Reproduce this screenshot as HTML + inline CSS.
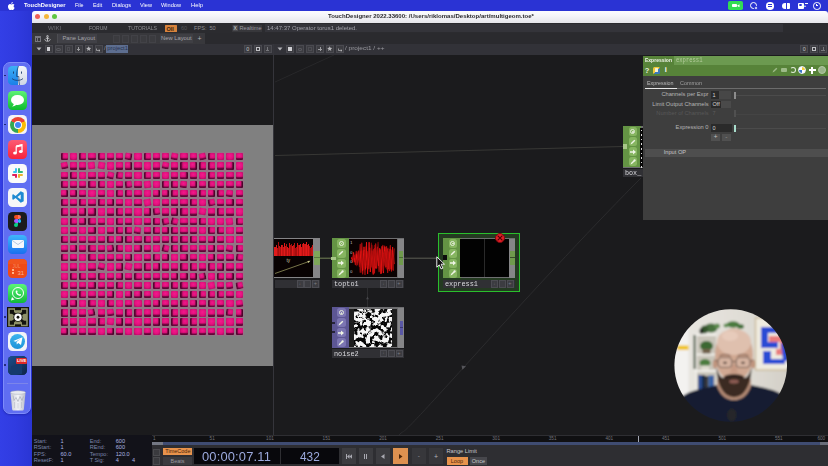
<!DOCTYPE html>
<html><head><meta charset="utf-8"><title>TouchDesigner</title>
<style>
*{box-sizing:border-box;margin:0;padding:0}
html,body{width:828px;height:466px;overflow:hidden;background:#2c36d6;font-family:"Liberation Sans",sans-serif;}
.a{position:absolute}
.t{position:absolute;white-space:nowrap;line-height:1}
.m{font-family:"Liberation Mono",monospace}
#desk{left:0;top:0;width:828px;height:466px;background:linear-gradient(90deg,#333fe6 0px,#303be0 16px,#2a35d4 32px,#2a35d4 100%)}
#menubar{left:0;top:0;width:828px;height:11px;background:#2a33d4}
#menubar .t{color:#fff;font-size:6px;top:2.400px}
#title{left:32px;top:10.700px;width:796px;height:12.300px;background:linear-gradient(#fcfcff 0%,#f5f5f9 40%,#e5e5ea 100%);border-radius:3px 3px 0 0}
#tb1{left:32px;top:23px;width:796px;height:10px;background:#2b2b2f}
#tb1 .t{color:#8d8d92;font-size:5.6px;top:2.6px}
#tb2{left:32px;top:33px;width:796px;height:11px;background:#2a2a2e}
#tb2 .t{color:#a5a5aa;font-size:5.8px;top:2.8px}
#pb{left:32px;top:43.700px;width:796px;height:11.300px;background:#323238}
.ib{position:absolute;top:1.5px;width:8px;height:8px;background:#3c3c41;border:0.5px solid #4a4a50;}
#net{left:32px;top:54.600px;width:796px;height:381.400px;background:#1b1b1d}
#viewer{left:32px;top:124.500px;width:241px;height:241px;background:#808080}
#split{left:273px;top:44px;width:1.100px;height:392px;background:#35353b}
.cube{position:absolute;width:7.300px;height:7.300px;border-radius:1px}
.c1{background:linear-gradient(180deg,rgba(90,6,52,0) 62%,rgba(90,6,52,.95) 84%),radial-gradient(circle at 48% 36%,#f2188c 0%,#e2107c 40%,#8a0a50 100%)}
.c2{background:linear-gradient(90deg,rgba(80,5,46,.95) 12%,rgba(80,5,46,0) 36%),linear-gradient(180deg,rgba(90,6,52,0) 70%,rgba(90,6,52,.8) 92%),radial-gradient(circle at 62% 40%,#f0168a 0%,#d80f76 42%,#6a063e 100%)}
.c3{background:linear-gradient(270deg,rgba(70,4,40,.95) 10%,rgba(70,4,40,0) 34%),linear-gradient(180deg,rgba(90,6,52,0) 66%,rgba(90,6,52,.9) 88%),radial-gradient(circle at 40% 32%,#f41a8e 0%,#d80f76 42%,#62063a 100%)}
.c4{background:radial-gradient(circle at 50% 40%,#f31a8d 0%,#e4117e 50%,#9a0b58 100%)}
</style></head><body>
<div id="desk" class="a"></div>
<div id="menubar" class="a"><svg class="a" style="left:7.5px;top:1.5px" width="7" height="8" viewBox="0 0 14 16"><path fill="#fff" d="M9.7 0c.1 1-.3 1.9-.9 2.600-.6.700-1.500 1.200-2.400 1.100-.1-.9.400-1.900.9-2.500C7.900.500 8.900.050 9.700 0zM12.900 5.500c-1.100.700-1.700 1.700-1.700 2.900 0 1.500.9 2.600 2 3.100-.3.900-.7 1.700-1.300 2.500-.700 1-1.400 2-2.500 2-1.100 0-1.400-.7-2.700-.7-1.300 0-1.700.7-2.700.7-1.100 0-1.900-1.100-2.600-2.100C-.3 11.500-.5 7.900.900 6c.8-1.200 2-1.900 3.200-1.900 1.200 0 1.900.7 2.900.7 1 0 1.600-.7 3-.7 1 0 2.100.5 2.900 1.400z"></path></svg><span class="t" style="left: 24px; font-weight: bold; transform: scaleX(0.96); transform-origin: 0px 0px;">TouchDesigner</span><span class="t" style="left: 74.5px; transform: scaleX(0.879); transform-origin: 0px 0px;">File</span><span class="t" style="left: 93px; transform: scaleX(0.889); transform-origin: 0px 0px;">Edit</span><span class="t" style="left: 112px; transform: scaleX(0.949); transform-origin: 0px 0px;">Dialogs</span><span class="t" style="left: 140px; transform: scaleX(0.93); transform-origin: 0px 0px;">View</span><span class="t" style="left: 161px; transform: scaleX(0.937); transform-origin: 0px 0px;">Window</span><span class="t" style="left: 191px; transform: scaleX(0.972); transform-origin: 0px 0px;">Help</span><div class="a" style="left:728px;top:.8px;width:15.200px;height:9.200px;border-radius:1.800px;background:#32dc54"></div><div class="a" style="left:732.200px;top:3.600px;width:5px;height:3.800px;border-radius:.8px;background:#fff"></div><svg class="a" style="left:737.200px;top:3.700px" width="3" height="3.6" viewBox="0 0 3 3.6"><path d="M0 1.800L2.500 .2V3.400z" fill="#fff"></path></svg><div class="a" style="left:749.5px;top:2px;width:7px;height:7px;border-radius:50%;border:1.2px solid #fff"></div><div class="a" style="left:753.5px;top:5.5px;width:4px;height:4px;border-radius:50%;background:#fff;border:.6px solid #2a33d4"></div><div class="a" style="left:766px;top:2px;width:7.500px;height:7.500px;border-radius:50%;background:#fff"></div><div class="a" style="left:767.5px;top:4.2px;width:4.5px;height:1px;background:#2a33d4"></div><div class="a" style="left:767.5px;top:6.2px;width:4.5px;height:1px;background:#2a33d4"></div><div class="a" style="left:781.5px;top:2.5px;width:8px;height:6.5px;border-radius:3px 1px 1px 3px;background:#fff"></div><div class="a" style="left:786px;top:2.5px;width:1.2px;height:6.5px;background:#2a33d4"></div><div class="a" style="left:797.5px;top:2.5px;width:6px;height:6px;border-radius:1px;background:#fff"></div><div class="a" style="left:799px;top:3.6px;width:3px;height:2.2px;border-radius:50%;background:#2a33d4"></div><div class="t" style="left:804px;top:4px;color:#fff;font-size:5px">•</div><div class="a" style="left:804.5px;top:3.2px;width:3.5px;height:.9px;background:#fff"></div><div class="a" style="left:813px;top:2px;width:7.500px;height:7.500px;border-radius:50%;border:1px solid #fff"></div><div class="a" style="left:816.3px;top:3.6px;width:.9px;height:2.600px;background:#fff"></div><div class="a" style="left:816.3px;top:5.4px;width:2.2px;height:.9px;background:#fff"></div></div><div id="title" class="a"><div class="a" style="left:3px;top:3.2px;width:5.4px;height:5.4px;border-radius:50%;background:#ec5f57"></div><div class="a" style="left:11.5px;top:3.2px;width:5.4px;height:5.4px;border-radius:50%;background:#f4b63a"></div><div class="a" style="left:20px;top:3.2px;width:5.4px;height:5.4px;border-radius:50%;background:#5fc643"></div><span class="t" id="ttl" style="left: 295.5px; top: 3.2px; font-size: 5.95px; font-weight: bold; color: rgb(42, 42, 46); transform: scaleX(1.017); transform-origin: 0px 0px;">TouchDesigner 2022.33600: /Users/riklomas/Desktop/art/multigeom.toe*</span></div><div id="tb1" class="a"><span class="t" style="left: 15.5px; color: rgb(112, 112, 118); transform: scaleX(1.113); transform-origin: 0px 0px;">WIKI</span><span class="t" style="left: 57px; color: rgb(141, 141, 146); transform: scaleX(0.902); transform-origin: 0px 0px;">FORUM</span><span class="t" style="left: 96px; color: rgb(141, 141, 146); transform: scaleX(0.927); transform-origin: 0px 0px;">TUTORIALS</span><div class="a" style="left:133px;top:1.500px;width:11.500px;height:7px;background:#d8833c;border-radius:.5px"></div><span class="t" style="left:134.5px;color:#3a2410;font-weight:bold;font-size:5.5px;top:3.700px">OII</span><span class="t" style="left:149px;color:#55555a">60</span><span class="t" style="left:162px">FPS:</span><span class="t" style="left:177.5px">50</span><div class="a" style="left:199.5px;top:1.5px;width:30.5px;height:7.500px;background:#37373b"></div><div class="a" style="left:200.5px;top:2.2px;width:5.5px;height:5.5px;background:#4a4a4f"></div><span class="t" style="left:201.6px;color:#ddd;font-size:5px;top:2.7px">X</span><span class="t" style="left:207.500px;color:#9a9aa0">Realtime</span><div class="a" style="left:233px;top:.8px;width:518px;height:8.700px;background:#34343a"></div><span class="t" style="left: 235px; color: rgb(160, 160, 168); transform: scaleX(1.072); transform-origin: 0px 0px;">14:47:37 Operator torus1 deleted.</span></div><div id="tb2" class="a"><div class="a" style="left:0;top:0;width:173px;height:11px;background:#38383c"></div><div class="a" style="left:2.5px;top:2.5px;width:6px;height:6px;border:.8px solid #77777e"></div><div class="a" style="left:2.5px;top:4.3px;width:6px;height:.8px;background:#77777e"></div><div class="a" style="left:5px;top:4.3px;width:.8px;height:4px;background:#77777e"></div><svg class="a" style="left:11.5px;top:2px" width="7" height="7" viewBox="0 0 14 14"><g stroke="#c8c8cc" stroke-width="1.800" fill="none"><circle cx="7" cy="2.5" r="1.600"></circle><path d="M7 4v8M3.500 6.500h7M1.500 8.500c.5 3 3 4 5.500 4s5-1 5.500-4"></path></g></svg><div class="a" style="left:25px;top:1px;width:39.500px;height:9px;background:#414147;border-left:.6px solid #4d4d52"></div><span class="t" style="left:30.5px">Pane Layout</span><div class="a" style="left:80.5px;top:1.500px;width:7.600px;height:8px;background:#3b3b3f;border:.5px solid #424247"></div><div class="a" style="left:89.6px;top:1.500px;width:7.600px;height:8px;background:#3b3b3f;border:.5px solid #424247"></div><div class="a" style="left:98.7px;top:1.500px;width:7.600px;height:8px;background:#3b3b3f;border:.5px solid #424247"></div><div class="a" style="left:107.8px;top:1.500px;width:7.600px;height:8px;background:#3b3b3f;border:.5px solid #424247"></div><div class="a" style="left:116.9px;top:1.500px;width:7.600px;height:8px;background:#3b3b3f;border:.5px solid #424247"></div><div class="a" style="left:127.500px;top:1px;width:33px;height:9px;background:#3f3f44"></div><span class="t" style="left:129px">New Layout</span><span class="t" style="left:165.500px;top:2.2px;font-size:7px;color:#b0b0b5">+</span></div><div id="pb" class="a"><svg class="a" style="left:3.5px;top:3.500px" width="6" height="4" viewBox="0 0 6 4"><path d="M.500 .5h5L3 3.600z" fill="#b0b0b4"></path></svg><div class="ib" style="left:12.5px"></div><div class="a" style="left:14.7px;top:3.700px;width:3.600px;height:3.600px;background:#d0d0d4"></div><div class="ib" style="left:22.5px"></div><div class="a" style="left:24.3px;top:4px;width:4.400px;height:3px;border-radius:50%;border:.7px solid #5a5a60"></div><div class="ib" style="left:32.5px"></div><div class="a" style="left:34.7px;top:3.700px;width:3.600px;height:3.600px;border:.6px solid #4c4c52"></div><div class="ib" style="left:42.5px"></div><div class="a" style="left:44.6px;top:5.200px;width:3.800px;height:.8px;background:#9c9ca0"></div><div class="a" style="left:46.1px;top:3.700px;width:.8px;height:3.800px;background:#9c9ca0"></div><div class="ib" style="left:52.5px"></div><svg class="a" style="left:53.8px;top:2.800px" width="5.400" height="5.400" viewBox="0 0 10 10"><path d="M5 .3l1.400 3.100 3.400.3-2.600 2.200.8 3.400L5 7.500 2 9.300l.8-3.400L.2 3.700l3.400-.3z" fill="#b4b4b8"></path></svg><div class="ib" style="left:62.5px"></div><svg class="a" style="left:64.1px;top:3.300px" width="5" height="5" viewBox="0 0 10 10"><path d="M1 3v4h7M8 7l-2.500-2M8 7l-2.500 2" stroke="#c4c4c8" stroke-width="1.300" fill="none"></path></svg><span class="t" style="left:72px;top:2.800px;font-size:5.800px;color:#9a9aa0">/</span><div class="a" style="left:74.400px;top:1.600px;width:22px;height:7.800px;background:#5d6e90"></div><span class="t" style="left:75.300px;top:2.800px;font-size:5.800px;color:#28324e">project1</span><div class="ib" style="left:211.5px"></div><div class="ib" style="left:221.5px"></div><div class="ib" style="left:231.5px"></div><span class="t" style="left:214.300px;top:3px;font-size:5.400px;color:#c0c0c4">0</span><div class="a" style="left:223.800px;top:3.600px;width:4.400px;height:4px;border:.7px solid #c0c0c4;border-top-width:1.300px"></div><div class="a" style="left:235px;top:3.300px;width:1px;height:3.600px;background:#77777c"></div><div class="a" style="left:233.800px;top:6.200px;width:3.400px;height:1px;background:#77777c"></div><svg class="a" style="left:245px;top:3.500px" width="6" height="4" viewBox="0 0 6 4"><path d="M.500 .5h5L3 3.600z" fill="#b0b0b4"></path></svg><div class="ib" style="left:254px"></div><div class="a" style="left:256.2px;top:3.700px;width:3.600px;height:3.600px;background:#d0d0d4"></div><div class="ib" style="left:264px"></div><div class="a" style="left:265.8px;top:4px;width:4.400px;height:3px;border-radius:50%;border:.7px solid #5a5a60"></div><div class="ib" style="left:274px"></div><div class="a" style="left:276.2px;top:3.700px;width:3.600px;height:3.600px;border:.6px solid #4c4c52"></div><div class="ib" style="left:284px"></div><div class="a" style="left:286.1px;top:5.200px;width:3.800px;height:.8px;background:#9c9ca0"></div><div class="a" style="left:287.6px;top:3.700px;width:.8px;height:3.800px;background:#9c9ca0"></div><div class="ib" style="left:294px"></div><svg class="a" style="left:295.3px;top:2.800px" width="5.400" height="5.400" viewBox="0 0 10 10"><path d="M5 .3l1.400 3.100 3.400.3-2.600 2.200.8 3.400L5 7.500 2 9.300l.8-3.400L.2 3.700l3.400-.3z" fill="#b4b4b8"></path></svg><div class="ib" style="left:304px"></div><svg class="a" style="left:305.6px;top:3.300px" width="5" height="5" viewBox="0 0 10 10"><path d="M1 3v4h7M8 7l-2.500-2M8 7l-2.500 2" stroke="#c4c4c8" stroke-width="1.300" fill="none"></path></svg><span class="t" style="left: 312.6px; top: 2.8px; font-size: 5.8px; color: rgb(154, 154, 160); transform: scaleX(1.114); transform-origin: 0px 0px;">/ project1 / ++</span><div class="ib" style="left:768px"></div><div class="ib" style="left:777.5px"></div><div class="ib" style="left:787px"></div><span class="t" style="left:770.800px;top:3px;font-size:5.400px;color:#c0c0c4">0</span><div class="a" style="left:779.800px;top:3.600px;width:4.400px;height:4px;border:.7px solid #c0c0c4;border-top-width:1.300px"></div><div class="a" style="left:790.500px;top:3.300px;width:1px;height:3.600px;background:#77777c"></div><div class="a" style="left:789.300px;top:6.200px;width:3.400px;height:1px;background:#77777c"></div></div><div id="net" class="a"></div><div id="viewer" class="a"><div class="a" style="left:28px;top:27.700px;width:184px;height:183.500px;background:rgba(228,70,156,.19)"></div><i class="cube c2" style="left:28.8px;top:28.7px;"></i><i class="cube c4" style="left:38.0px;top:28.7px;"></i><i class="cube c2" style="left:47.2px;top:28.7px;"></i><i class="cube c1" style="left:56.4px;top:28.7px;"></i><i class="cube c2" style="left:65.6px;top:28.7px;"></i><i class="cube c1" style="left:74.8px;top:28.7px;"></i><i class="cube c1" style="left:84.0px;top:28.7px;"></i><i class="cube c3" style="left:93.2px;top:28.7px;transform:rotate(9deg);"></i><i class="cube c4" style="left:102.4px;top:28.7px;"></i><i class="cube c2" style="left:111.6px;top:28.7px;"></i><i class="cube c1" style="left:120.8px;top:28.7px;"></i><i class="cube c1" style="left:130.0px;top:28.7px;"></i><i class="cube c1" style="left:139.2px;top:28.7px;transform:rotate(9deg);"></i><i class="cube c1" style="left:148.4px;top:28.7px;"></i><i class="cube c1" style="left:157.6px;top:28.7px;"></i><i class="cube c1" style="left:166.8px;top:28.7px;transform:rotate(-10deg);"></i><i class="cube c2" style="left:176.0px;top:28.7px;"></i><i class="cube c4" style="left:185.2px;top:28.7px;"></i><i class="cube c4" style="left:194.4px;top:28.7px;"></i><i class="cube c1" style="left:203.6px;top:28.7px;"></i><i class="cube c1" style="left:28.8px;top:37.9px;transform:rotate(-10deg);"></i><i class="cube c1" style="left:38.0px;top:37.9px;"></i><i class="cube c1" style="left:47.2px;top:37.9px;"></i><i class="cube c4" style="left:56.4px;top:37.9px;transform:rotate(-7deg);"></i><i class="cube c4" style="left:65.6px;top:37.9px;transform:rotate(9deg);"></i><i class="cube c4" style="left:74.8px;top:37.9px;"></i><i class="cube c1" style="left:84.0px;top:37.9px;"></i><i class="cube c3" style="left:93.2px;top:37.9px;"></i><i class="cube c1" style="left:102.4px;top:37.9px;"></i><i class="cube c4" style="left:111.6px;top:37.9px;"></i><i class="cube c1" style="left:120.8px;top:37.9px;"></i><i class="cube c1" style="left:130.0px;top:37.9px;transform:rotate(9deg);"></i><i class="cube c1" style="left:139.2px;top:37.9px;"></i><i class="cube c2" style="left:148.4px;top:37.9px;"></i><i class="cube c3" style="left:157.6px;top:37.9px;"></i><i class="cube c2" style="left:166.8px;top:37.9px;"></i><i class="cube c2" style="left:176.0px;top:37.9px;"></i><i class="cube c1" style="left:185.2px;top:37.9px;"></i><i class="cube c3" style="left:194.4px;top:37.9px;"></i><i class="cube c4" style="left:203.6px;top:37.9px;"></i><i class="cube c1" style="left:28.8px;top:47.1px;"></i><i class="cube c2" style="left:38.0px;top:47.1px;"></i><i class="cube c4" style="left:47.2px;top:47.1px;"></i><i class="cube c1" style="left:56.4px;top:47.1px;"></i><i class="cube c1" style="left:65.6px;top:47.1px;"></i><i class="cube c1" style="left:74.8px;top:47.1px;transform:rotate(12deg);"></i><i class="cube c2" style="left:84.0px;top:47.1px;transform:rotate(6deg);"></i><i class="cube c1" style="left:93.2px;top:47.1px;"></i><i class="cube c4" style="left:102.4px;top:47.1px;"></i><i class="cube c2" style="left:111.6px;top:47.1px;"></i><i class="cube c1" style="left:120.8px;top:47.1px;"></i><i class="cube c4" style="left:130.0px;top:47.1px;"></i><i class="cube c1" style="left:139.2px;top:47.1px;"></i><i class="cube c3" style="left:148.4px;top:47.1px;"></i><i class="cube c1" style="left:157.6px;top:47.1px;"></i><i class="cube c4" style="left:166.8px;top:47.1px;"></i><i class="cube c2" style="left:176.0px;top:47.1px;"></i><i class="cube c1" style="left:185.2px;top:47.1px;"></i><i class="cube c1" style="left:194.4px;top:47.1px;"></i><i class="cube c1" style="left:203.6px;top:47.1px;"></i><i class="cube c2" style="left:28.8px;top:56.2px;"></i><i class="cube c1" style="left:38.0px;top:56.2px;"></i><i class="cube c1" style="left:47.2px;top:56.2px;"></i><i class="cube c2" style="left:56.4px;top:56.2px;"></i><i class="cube c2" style="left:65.6px;top:56.2px;"></i><i class="cube c4" style="left:74.8px;top:56.2px;"></i><i class="cube c1" style="left:84.0px;top:56.2px;"></i><i class="cube c2" style="left:93.2px;top:56.2px;transform:rotate(-7deg);"></i><i class="cube c1" style="left:102.4px;top:56.2px;"></i><i class="cube c4" style="left:111.6px;top:56.2px;transform:rotate(-7deg);"></i><i class="cube c4" style="left:120.8px;top:56.2px;"></i><i class="cube c2" style="left:130.0px;top:56.2px;"></i><i class="cube c2" style="left:139.2px;top:56.2px;"></i><i class="cube c1" style="left:148.4px;top:56.2px;transform:rotate(6deg);"></i><i class="cube c3" style="left:157.6px;top:56.2px;"></i><i class="cube c1" style="left:166.8px;top:56.2px;"></i><i class="cube c2" style="left:176.0px;top:56.2px;"></i><i class="cube c1" style="left:185.2px;top:56.2px;"></i><i class="cube c1" style="left:194.4px;top:56.2px;"></i><i class="cube c3" style="left:203.6px;top:56.2px;"></i><i class="cube c3" style="left:28.8px;top:65.4px;"></i><i class="cube c3" style="left:38.0px;top:65.4px;"></i><i class="cube c1" style="left:47.2px;top:65.4px;"></i><i class="cube c4" style="left:56.4px;top:65.4px;"></i><i class="cube c1" style="left:65.6px;top:65.4px;"></i><i class="cube c4" style="left:74.8px;top:65.4px;"></i><i class="cube c2" style="left:84.0px;top:65.4px;"></i><i class="cube c2" style="left:93.2px;top:65.4px;"></i><i class="cube c1" style="left:102.4px;top:65.4px;"></i><i class="cube c4" style="left:111.6px;top:65.4px;"></i><i class="cube c3" style="left:120.8px;top:65.4px;"></i><i class="cube c3" style="left:130.0px;top:65.4px;"></i><i class="cube c2" style="left:139.2px;top:65.4px;"></i><i class="cube c1" style="left:148.4px;top:65.4px;"></i><i class="cube c1" style="left:157.6px;top:65.4px;"></i><i class="cube c2" style="left:166.8px;top:65.4px;"></i><i class="cube c3" style="left:176.0px;top:65.4px;"></i><i class="cube c2" style="left:185.2px;top:65.4px;"></i><i class="cube c1" style="left:194.4px;top:65.4px;transform:rotate(6deg);"></i><i class="cube c1" style="left:203.6px;top:65.4px;"></i><i class="cube c2" style="left:28.8px;top:74.6px;"></i><i class="cube c1" style="left:38.0px;top:74.6px;"></i><i class="cube c2" style="left:47.2px;top:74.6px;"></i><i class="cube c1" style="left:56.4px;top:74.6px;"></i><i class="cube c2" style="left:65.6px;top:74.6px;"></i><i class="cube c3" style="left:74.8px;top:74.6px;"></i><i class="cube c1" style="left:84.0px;top:74.6px;"></i><i class="cube c4" style="left:93.2px;top:74.6px;"></i><i class="cube c1" style="left:102.4px;top:74.6px;"></i><i class="cube c4" style="left:111.6px;top:74.6px;transform:rotate(-10deg);"></i><i class="cube c4" style="left:120.8px;top:74.6px;"></i><i class="cube c1" style="left:130.0px;top:74.6px;"></i><i class="cube c1" style="left:139.2px;top:74.6px;"></i><i class="cube c1" style="left:148.4px;top:74.6px;"></i><i class="cube c2" style="left:157.6px;top:74.6px;"></i><i class="cube c4" style="left:166.8px;top:74.6px;"></i><i class="cube c2" style="left:176.0px;top:74.6px;transform:rotate(-10deg);"></i><i class="cube c1" style="left:185.2px;top:74.6px;"></i><i class="cube c3" style="left:194.4px;top:74.6px;"></i><i class="cube c1" style="left:203.6px;top:74.6px;"></i><i class="cube c2" style="left:28.8px;top:83.8px;"></i><i class="cube c1" style="left:38.0px;top:83.8px;"></i><i class="cube c3" style="left:47.2px;top:83.8px;"></i><i class="cube c3" style="left:56.4px;top:83.8px;"></i><i class="cube c4" style="left:65.6px;top:83.8px;"></i><i class="cube c1" style="left:74.8px;top:83.8px;"></i><i class="cube c2" style="left:84.0px;top:83.8px;"></i><i class="cube c1" style="left:93.2px;top:83.8px;"></i><i class="cube c4" style="left:102.4px;top:83.8px;"></i><i class="cube c3" style="left:111.6px;top:83.8px;"></i><i class="cube c2" style="left:120.8px;top:83.8px;transform:rotate(-7deg);"></i><i class="cube c1" style="left:130.0px;top:83.8px;"></i><i class="cube c3" style="left:139.2px;top:83.8px;"></i><i class="cube c2" style="left:148.4px;top:83.8px;"></i><i class="cube c1" style="left:157.6px;top:83.8px;"></i><i class="cube c4" style="left:166.8px;top:83.8px;transform:rotate(9deg);"></i><i class="cube c1" style="left:176.0px;top:83.8px;"></i><i class="cube c2" style="left:185.2px;top:83.8px;"></i><i class="cube c1" style="left:194.4px;top:83.8px;"></i><i class="cube c4" style="left:203.6px;top:83.8px;"></i><i class="cube c4" style="left:28.8px;top:93.0px;"></i><i class="cube c2" style="left:38.0px;top:93.0px;"></i><i class="cube c3" style="left:47.2px;top:93.0px;"></i><i class="cube c2" style="left:56.4px;top:93.0px;"></i><i class="cube c1" style="left:65.6px;top:93.0px;"></i><i class="cube c4" style="left:74.8px;top:93.0px;"></i><i class="cube c2" style="left:84.0px;top:93.0px;"></i><i class="cube c1" style="left:93.2px;top:93.0px;"></i><i class="cube c4" style="left:102.4px;top:93.0px;"></i><i class="cube c1" style="left:111.6px;top:93.0px;"></i><i class="cube c2" style="left:120.8px;top:93.0px;"></i><i class="cube c2" style="left:130.0px;top:93.0px;transform:rotate(-10deg);"></i><i class="cube c2" style="left:139.2px;top:93.0px;transform:rotate(12deg);"></i><i class="cube c1" style="left:148.4px;top:93.0px;"></i><i class="cube c1" style="left:157.6px;top:93.0px;"></i><i class="cube c2" style="left:166.8px;top:93.0px;"></i><i class="cube c4" style="left:176.0px;top:93.0px;"></i><i class="cube c4" style="left:185.2px;top:93.0px;"></i><i class="cube c4" style="left:194.4px;top:93.0px;transform:rotate(-7deg);"></i><i class="cube c2" style="left:203.6px;top:93.0px;"></i><i class="cube c4" style="left:28.8px;top:102.1px;"></i><i class="cube c1" style="left:38.0px;top:102.1px;"></i><i class="cube c4" style="left:47.2px;top:102.1px;"></i><i class="cube c3" style="left:56.4px;top:102.1px;"></i><i class="cube c4" style="left:65.6px;top:102.1px;"></i><i class="cube c1" style="left:74.8px;top:102.1px;"></i><i class="cube c2" style="left:84.0px;top:102.1px;"></i><i class="cube c2" style="left:93.2px;top:102.1px;"></i><i class="cube c1" style="left:102.4px;top:102.1px;transform:rotate(9deg);"></i><i class="cube c1" style="left:111.6px;top:102.1px;"></i><i class="cube c2" style="left:120.8px;top:102.1px;"></i><i class="cube c3" style="left:130.0px;top:102.1px;"></i><i class="cube c2" style="left:139.2px;top:102.1px;"></i><i class="cube c1" style="left:148.4px;top:102.1px;"></i><i class="cube c1" style="left:157.6px;top:102.1px;"></i><i class="cube c4" style="left:166.8px;top:102.1px;"></i><i class="cube c2" style="left:176.0px;top:102.1px;"></i><i class="cube c2" style="left:185.2px;top:102.1px;"></i><i class="cube c4" style="left:194.4px;top:102.1px;"></i><i class="cube c1" style="left:203.6px;top:102.1px;"></i><i class="cube c2" style="left:28.8px;top:111.3px;"></i><i class="cube c1" style="left:38.0px;top:111.3px;"></i><i class="cube c1" style="left:47.2px;top:111.3px;"></i><i class="cube c1" style="left:56.4px;top:111.3px;"></i><i class="cube c1" style="left:65.6px;top:111.3px;"></i><i class="cube c2" style="left:74.8px;top:111.3px;"></i><i class="cube c3" style="left:84.0px;top:111.3px;"></i><i class="cube c2" style="left:93.2px;top:111.3px;"></i><i class="cube c1" style="left:102.4px;top:111.3px;"></i><i class="cube c2" style="left:111.6px;top:111.3px;"></i><i class="cube c1" style="left:120.8px;top:111.3px;"></i><i class="cube c1" style="left:130.0px;top:111.3px;"></i><i class="cube c2" style="left:139.2px;top:111.3px;"></i><i class="cube c2" style="left:148.4px;top:111.3px;"></i><i class="cube c2" style="left:157.6px;top:111.3px;"></i><i class="cube c1" style="left:166.8px;top:111.3px;"></i><i class="cube c3" style="left:176.0px;top:111.3px;"></i><i class="cube c1" style="left:185.2px;top:111.3px;"></i><i class="cube c4" style="left:194.4px;top:111.3px;"></i><i class="cube c4" style="left:203.6px;top:111.3px;"></i><i class="cube c1" style="left:28.8px;top:120.5px;"></i><i class="cube c3" style="left:38.0px;top:120.5px;"></i><i class="cube c1" style="left:47.2px;top:120.5px;"></i><i class="cube c2" style="left:56.4px;top:120.5px;"></i><i class="cube c1" style="left:65.6px;top:120.5px;"></i><i class="cube c3" style="left:74.8px;top:120.5px;transform:rotate(-7deg);"></i><i class="cube c2" style="left:84.0px;top:120.5px;"></i><i class="cube c4" style="left:93.2px;top:120.5px;"></i><i class="cube c3" style="left:102.4px;top:120.5px;"></i><i class="cube c1" style="left:111.6px;top:120.5px;"></i><i class="cube c4" style="left:120.8px;top:120.5px;"></i><i class="cube c2" style="left:130.0px;top:120.5px;transform:rotate(12deg);"></i><i class="cube c2" style="left:139.2px;top:120.5px;"></i><i class="cube c2" style="left:148.4px;top:120.5px;"></i><i class="cube c1" style="left:157.6px;top:120.5px;"></i><i class="cube c1" style="left:166.8px;top:120.5px;"></i><i class="cube c3" style="left:176.0px;top:120.5px;"></i><i class="cube c1" style="left:185.2px;top:120.5px;"></i><i class="cube c1" style="left:194.4px;top:120.5px;transform:rotate(9deg);"></i><i class="cube c2" style="left:203.6px;top:120.5px;"></i><i class="cube c2" style="left:28.8px;top:129.7px;"></i><i class="cube c1" style="left:38.0px;top:129.7px;"></i><i class="cube c4" style="left:47.2px;top:129.7px;"></i><i class="cube c2" style="left:56.4px;top:129.7px;"></i><i class="cube c1" style="left:65.6px;top:129.7px;"></i><i class="cube c1" style="left:74.8px;top:129.7px;"></i><i class="cube c1" style="left:84.0px;top:129.7px;"></i><i class="cube c3" style="left:93.2px;top:129.7px;"></i><i class="cube c4" style="left:102.4px;top:129.7px;"></i><i class="cube c1" style="left:111.6px;top:129.7px;"></i><i class="cube c2" style="left:120.8px;top:129.7px;"></i><i class="cube c3" style="left:130.0px;top:129.7px;"></i><i class="cube c4" style="left:139.2px;top:129.7px;"></i><i class="cube c3" style="left:148.4px;top:129.7px;"></i><i class="cube c1" style="left:157.6px;top:129.7px;"></i><i class="cube c4" style="left:166.8px;top:129.7px;"></i><i class="cube c3" style="left:176.0px;top:129.7px;"></i><i class="cube c1" style="left:185.2px;top:129.7px;"></i><i class="cube c1" style="left:194.4px;top:129.7px;"></i><i class="cube c2" style="left:203.6px;top:129.7px;transform:rotate(6deg);"></i><i class="cube c4" style="left:28.8px;top:138.9px;"></i><i class="cube c1" style="left:38.0px;top:138.9px;"></i><i class="cube c4" style="left:47.2px;top:138.9px;"></i><i class="cube c1" style="left:56.4px;top:138.9px;"></i><i class="cube c1" style="left:65.6px;top:138.9px;transform:rotate(12deg);"></i><i class="cube c4" style="left:74.8px;top:138.9px;"></i><i class="cube c3" style="left:84.0px;top:138.9px;"></i><i class="cube c4" style="left:93.2px;top:138.9px;transform:rotate(12deg);"></i><i class="cube c1" style="left:102.4px;top:138.9px;"></i><i class="cube c2" style="left:111.6px;top:138.9px;"></i><i class="cube c3" style="left:120.8px;top:138.9px;"></i><i class="cube c1" style="left:130.0px;top:138.9px;"></i><i class="cube c1" style="left:139.2px;top:138.9px;"></i><i class="cube c2" style="left:148.4px;top:138.9px;"></i><i class="cube c2" style="left:157.6px;top:138.9px;"></i><i class="cube c1" style="left:166.8px;top:138.9px;"></i><i class="cube c2" style="left:176.0px;top:138.9px;"></i><i class="cube c3" style="left:185.2px;top:138.9px;"></i><i class="cube c1" style="left:194.4px;top:138.9px;"></i><i class="cube c1" style="left:203.6px;top:138.9px;"></i><i class="cube c4" style="left:28.8px;top:148.0px;"></i><i class="cube c2" style="left:38.0px;top:148.0px;"></i><i class="cube c2" style="left:47.2px;top:148.0px;"></i><i class="cube c1" style="left:56.4px;top:148.0px;"></i><i class="cube c2" style="left:65.6px;top:148.0px;"></i><i class="cube c1" style="left:74.8px;top:148.0px;"></i><i class="cube c3" style="left:84.0px;top:148.0px;"></i><i class="cube c1" style="left:93.2px;top:148.0px;"></i><i class="cube c2" style="left:102.4px;top:148.0px;"></i><i class="cube c1" style="left:111.6px;top:148.0px;"></i><i class="cube c1" style="left:120.8px;top:148.0px;"></i><i class="cube c1" style="left:130.0px;top:148.0px;"></i><i class="cube c3" style="left:139.2px;top:148.0px;"></i><i class="cube c3" style="left:148.4px;top:148.0px;"></i><i class="cube c3" style="left:157.6px;top:148.0px;"></i><i class="cube c3" style="left:166.8px;top:148.0px;transform:rotate(-10deg);"></i><i class="cube c4" style="left:176.0px;top:148.0px;"></i><i class="cube c2" style="left:185.2px;top:148.0px;"></i><i class="cube c3" style="left:194.4px;top:148.0px;"></i><i class="cube c1" style="left:203.6px;top:148.0px;"></i><i class="cube c2" style="left:28.8px;top:157.2px;"></i><i class="cube c1" style="left:38.0px;top:157.2px;"></i><i class="cube c1" style="left:47.2px;top:157.2px;"></i><i class="cube c3" style="left:56.4px;top:157.2px;"></i><i class="cube c1" style="left:65.6px;top:157.2px;"></i><i class="cube c1" style="left:74.8px;top:157.2px;"></i><i class="cube c2" style="left:84.0px;top:157.2px;"></i><i class="cube c4" style="left:93.2px;top:157.2px;"></i><i class="cube c1" style="left:102.4px;top:157.2px;"></i><i class="cube c4" style="left:111.6px;top:157.2px;"></i><i class="cube c2" style="left:120.8px;top:157.2px;"></i><i class="cube c1" style="left:130.0px;top:157.2px;"></i><i class="cube c2" style="left:139.2px;top:157.2px;"></i><i class="cube c2" style="left:148.4px;top:157.2px;"></i><i class="cube c1" style="left:157.6px;top:157.2px;"></i><i class="cube c4" style="left:166.8px;top:157.2px;"></i><i class="cube c4" style="left:176.0px;top:157.2px;transform:rotate(-10deg);"></i><i class="cube c1" style="left:185.2px;top:157.2px;"></i><i class="cube c1" style="left:194.4px;top:157.2px;transform:rotate(-7deg);"></i><i class="cube c2" style="left:203.6px;top:157.2px;transform:rotate(-10deg);"></i><i class="cube c4" style="left:28.8px;top:166.4px;"></i><i class="cube c1" style="left:38.0px;top:166.4px;"></i><i class="cube c2" style="left:47.2px;top:166.4px;"></i><i class="cube c1" style="left:56.4px;top:166.4px;"></i><i class="cube c1" style="left:65.6px;top:166.4px;"></i><i class="cube c3" style="left:74.8px;top:166.4px;"></i><i class="cube c4" style="left:84.0px;top:166.4px;"></i><i class="cube c3" style="left:93.2px;top:166.4px;"></i><i class="cube c3" style="left:102.4px;top:166.4px;"></i><i class="cube c1" style="left:111.6px;top:166.4px;"></i><i class="cube c4" style="left:120.8px;top:166.4px;"></i><i class="cube c1" style="left:130.0px;top:166.4px;"></i><i class="cube c4" style="left:139.2px;top:166.4px;"></i><i class="cube c2" style="left:148.4px;top:166.4px;"></i><i class="cube c2" style="left:157.6px;top:166.4px;"></i><i class="cube c2" style="left:166.8px;top:166.4px;"></i><i class="cube c2" style="left:176.0px;top:166.4px;"></i><i class="cube c2" style="left:185.2px;top:166.4px;"></i><i class="cube c1" style="left:194.4px;top:166.4px;"></i><i class="cube c4" style="left:203.6px;top:166.4px;"></i><i class="cube c3" style="left:28.8px;top:175.6px;"></i><i class="cube c3" style="left:38.0px;top:175.6px;"></i><i class="cube c4" style="left:47.2px;top:175.6px;"></i><i class="cube c2" style="left:56.4px;top:175.6px;"></i><i class="cube c4" style="left:65.6px;top:175.6px;"></i><i class="cube c2" style="left:74.8px;top:175.6px;"></i><i class="cube c4" style="left:84.0px;top:175.6px;"></i><i class="cube c1" style="left:93.2px;top:175.6px;"></i><i class="cube c4" style="left:102.4px;top:175.6px;"></i><i class="cube c1" style="left:111.6px;top:175.6px;"></i><i class="cube c3" style="left:120.8px;top:175.6px;"></i><i class="cube c1" style="left:130.0px;top:175.6px;"></i><i class="cube c1" style="left:139.2px;top:175.6px;"></i><i class="cube c2" style="left:148.4px;top:175.6px;"></i><i class="cube c3" style="left:157.6px;top:175.6px;"></i><i class="cube c1" style="left:166.8px;top:175.6px;"></i><i class="cube c2" style="left:176.0px;top:175.6px;"></i><i class="cube c1" style="left:185.2px;top:175.6px;"></i><i class="cube c4" style="left:194.4px;top:175.6px;"></i><i class="cube c1" style="left:203.6px;top:175.6px;transform:rotate(-7deg);"></i><i class="cube c2" style="left:28.8px;top:184.8px;"></i><i class="cube c2" style="left:38.0px;top:184.8px;"></i><i class="cube c1" style="left:47.2px;top:184.8px;"></i><i class="cube c3" style="left:56.4px;top:184.8px;transform:rotate(-10deg);"></i><i class="cube c1" style="left:65.6px;top:184.8px;"></i><i class="cube c1" style="left:74.8px;top:184.8px;transform:rotate(-7deg);"></i><i class="cube c1" style="left:84.0px;top:184.8px;"></i><i class="cube c2" style="left:93.2px;top:184.8px;"></i><i class="cube c2" style="left:102.4px;top:184.8px;"></i><i class="cube c1" style="left:111.6px;top:184.8px;"></i><i class="cube c1" style="left:120.8px;top:184.8px;"></i><i class="cube c1" style="left:130.0px;top:184.8px;"></i><i class="cube c2" style="left:139.2px;top:184.8px;"></i><i class="cube c1" style="left:148.4px;top:184.8px;"></i><i class="cube c1" style="left:157.6px;top:184.8px;"></i><i class="cube c4" style="left:166.8px;top:184.8px;"></i><i class="cube c1" style="left:176.0px;top:184.8px;"></i><i class="cube c1" style="left:185.2px;top:184.8px;"></i><i class="cube c2" style="left:194.4px;top:184.8px;transform:rotate(6deg);"></i><i class="cube c3" style="left:203.6px;top:184.8px;"></i><i class="cube c2" style="left:28.8px;top:193.9px;"></i><i class="cube c1" style="left:38.0px;top:193.9px;"></i><i class="cube c4" style="left:47.2px;top:193.9px;"></i><i class="cube c1" style="left:56.4px;top:193.9px;"></i><i class="cube c2" style="left:65.6px;top:193.9px;"></i><i class="cube c4" style="left:74.8px;top:193.9px;transform:rotate(6deg);"></i><i class="cube c3" style="left:84.0px;top:193.9px;"></i><i class="cube c1" style="left:93.2px;top:193.9px;"></i><i class="cube c4" style="left:102.4px;top:193.9px;"></i><i class="cube c1" style="left:111.6px;top:193.9px;"></i><i class="cube c3" style="left:120.8px;top:193.9px;"></i><i class="cube c1" style="left:130.0px;top:193.9px;"></i><i class="cube c2" style="left:139.2px;top:193.9px;"></i><i class="cube c2" style="left:148.4px;top:193.9px;"></i><i class="cube c2" style="left:157.6px;top:193.9px;"></i><i class="cube c1" style="left:166.8px;top:193.9px;"></i><i class="cube c4" style="left:176.0px;top:193.9px;"></i><i class="cube c4" style="left:185.2px;top:193.9px;"></i><i class="cube c4" style="left:194.4px;top:193.9px;"></i><i class="cube c1" style="left:203.6px;top:193.9px;"></i><i class="cube c3" style="left:28.8px;top:203.1px;"></i><i class="cube c1" style="left:38.0px;top:203.1px;"></i><i class="cube c1" style="left:47.2px;top:203.1px;"></i><i class="cube c1" style="left:56.4px;top:203.1px;"></i><i class="cube c4" style="left:65.6px;top:203.1px;"></i><i class="cube c3" style="left:74.8px;top:203.1px;"></i><i class="cube c1" style="left:84.0px;top:203.1px;"></i><i class="cube c4" style="left:93.2px;top:203.1px;"></i><i class="cube c4" style="left:102.4px;top:203.1px;"></i><i class="cube c1" style="left:111.6px;top:203.1px;"></i><i class="cube c4" style="left:120.8px;top:203.1px;"></i><i class="cube c3" style="left:130.0px;top:203.1px;"></i><i class="cube c4" style="left:139.2px;top:203.1px;"></i><i class="cube c1" style="left:148.4px;top:203.1px;"></i><i class="cube c2" style="left:157.6px;top:203.1px;"></i><i class="cube c1" style="left:166.8px;top:203.1px;"></i><i class="cube c1" style="left:176.0px;top:203.1px;"></i><i class="cube c4" style="left:185.2px;top:203.1px;"></i><i class="cube c1" style="left:194.4px;top:203.1px;"></i><i class="cube c2" style="left:203.6px;top:203.1px;"></i></div><div id="split" class="a"></div><svg class="a" style="left:275px;top:55px" width="553" height="381" viewBox="275 55 553 381"><path d="M334 55L274 82.500" stroke="#28282a" stroke-width="1" fill="none"></path><path d="M275 155.500L623 146.500" stroke="#3b3b38" stroke-width=".9" fill="none"></path><path d="M641 178C600 219 540 283 464 367S410 424 398 436" stroke="#2b2b2d" stroke-width="1" fill="none"></path><path d="M461.500 365.500l4.500 .8-3.600 3.400z" fill="#55555a"></path><path d="M320 258.200H332" stroke="#7e8e5c" stroke-width=".9" fill="none"></path><path d="M404 258.200H443" stroke="#64665a" stroke-width=".9" fill="none"></path><path d="M367.500 287V307" stroke="#2e2e30" stroke-width="1" fill="none"></path><path d="M366.100 299.300l1.400-2.800 1.400 2.800z" fill="#48484c"></path></svg><div class="a" style="left:273.500px;top:237.500px;width:46.500px;height:40.500px;background:#858587"></div><div class="a" style="left:273.500px;top:239.300px;width:39.800px;height:37.500px;background:#080202;overflow:hidden"><div class="a" style="left:0px;top:7.3px;width:1.100px;height:9.9px;background:#e01a1a"></div><div class="a" style="left:1px;top:7.9px;width:1.100px;height:9.3px;background:#e01a1a"></div><div class="a" style="left:2px;top:5.9px;width:1.100px;height:11.3px;background:#e01a1a"></div><div class="a" style="left:3px;top:8.3px;width:1.100px;height:8.9px;background:#b81212"></div><div class="a" style="left:4px;top:3.2px;width:1.100px;height:14.0px;background:#a80e0e"></div><div class="a" style="left:5px;top:7.1px;width:1.100px;height:10.1px;background:#c41414"></div><div class="a" style="left:6px;top:7.5px;width:1.100px;height:9.7px;background:#a80e0e"></div><div class="a" style="left:7px;top:5.5px;width:1.100px;height:11.7px;background:#e01a1a"></div><div class="a" style="left:8px;top:5.8px;width:1.100px;height:11.4px;background:#c41414"></div><div class="a" style="left:9px;top:7.3px;width:1.100px;height:9.9px;background:#c41414"></div><div class="a" style="left:10px;top:3.5px;width:1.100px;height:13.7px;background:#e01a1a"></div><div class="a" style="left:11px;top:6.4px;width:1.100px;height:10.8px;background:#b81212"></div><div class="a" style="left:12px;top:4.7px;width:1.100px;height:12.5px;background:#b81212"></div><div class="a" style="left:13px;top:7.7px;width:1.100px;height:9.5px;background:#e01a1a"></div><div class="a" style="left:14px;top:8.4px;width:1.100px;height:8.8px;background:#b81212"></div><div class="a" style="left:15px;top:3.8px;width:1.100px;height:13.4px;background:#d41616"></div><div class="a" style="left:16px;top:5.9px;width:1.100px;height:11.3px;background:#a80e0e"></div><div class="a" style="left:17px;top:4.4px;width:1.100px;height:12.8px;background:#a80e0e"></div><div class="a" style="left:18px;top:6.3px;width:1.100px;height:10.9px;background:#e01a1a"></div><div class="a" style="left:19px;top:6.0px;width:1.100px;height:11.2px;background:#c41414"></div><div class="a" style="left:20px;top:3.4px;width:1.100px;height:13.8px;background:#b81212"></div><div class="a" style="left:21px;top:8.5px;width:1.100px;height:8.7px;background:#a80e0e"></div><div class="a" style="left:22px;top:7.4px;width:1.100px;height:9.8px;background:#a80e0e"></div><div class="a" style="left:23px;top:4.0px;width:1.100px;height:13.2px;background:#d41616"></div><div class="a" style="left:24px;top:6.2px;width:1.100px;height:11.0px;background:#a80e0e"></div><div class="a" style="left:25px;top:5.3px;width:1.100px;height:11.9px;background:#e01a1a"></div><div class="a" style="left:26px;top:5.2px;width:1.100px;height:12.0px;background:#e01a1a"></div><div class="a" style="left:27px;top:7.3px;width:1.100px;height:9.9px;background:#d41616"></div><div class="a" style="left:28px;top:4.6px;width:1.100px;height:12.6px;background:#b81212"></div><div class="a" style="left:29px;top:3.6px;width:1.100px;height:13.6px;background:#e01a1a"></div><div class="a" style="left:30px;top:4.7px;width:1.100px;height:12.5px;background:#c41414"></div><div class="a" style="left:31px;top:4.5px;width:1.100px;height:12.7px;background:#d41616"></div><div class="a" style="left:32px;top:2.9px;width:1.100px;height:14.3px;background:#e01a1a"></div><div class="a" style="left:33px;top:5.3px;width:1.100px;height:11.9px;background:#c41414"></div><div class="a" style="left:34px;top:4.9px;width:1.100px;height:12.3px;background:#e01a1a"></div><div class="a" style="left:35px;top:7.1px;width:1.100px;height:10.1px;background:#b81212"></div><div class="a" style="left:36px;top:8.3px;width:1.100px;height:8.9px;background:#a80e0e"></div><div class="a" style="left:37px;top:8.2px;width:1.100px;height:9.0px;background:#b81212"></div><div class="a" style="left:38px;top:6.2px;width:1.100px;height:11.0px;background:#c41414"></div><svg class="a" style="left:0;top:0" width="38.800" height="37.500" viewBox="0 0 38.800 37.500"><path d="M1 34.500L35 22.500" stroke="#a8a868" stroke-width=".7"></path><path d="M36.500 21.800l-3.200 .1 1.100 2.200z" fill="#d0d090"></path></svg><span class="t" style="left:13px;top:19.500px;font-size:4.800px;color:#c8c8a4">ty</span></div><div class="a" style="left:314px;top:251px;width:5.500px;height:13.500px;background:#7ea65a"></div><div class="a" style="left:314px;top:257.400px;width:5.500px;height:.8px;background:#5a7a40"></div><div class="a" style="left:274.5px;top:279.6px;width:45.5px;height:8.600px;background:#303034"></div><div class="a" style="left:296.5px;top:280.40000000000003px;width:7px;height:7.200px;background:#3c3c41;border:.5px solid #4c4c52"></div><div class="a" style="left:304.3px;top:280.40000000000003px;width:7px;height:7.200px;background:#3c3c41;border:.5px solid #4c4c52"></div><div class="a" style="left:312.1px;top:280.40000000000003px;width:7px;height:7.200px;background:#3c3c41;border:.5px solid #4c4c52"></div><span class="t" style="left:298.8px;top:281.90000000000003px;font-size:4.500px;color:#6c6c72">↓</span><span class="t" style="left:313.8px;top:281.1px;font-size:5.500px;color:#7c7c82">+</span><div class="a" style="left:331.500px;top:237.500px;width:72px;height:40.500px;background:#6e6e70"></div><div class="a" style="left:397.500px;top:238.500px;width:6px;height:39.500px;background:#858587"></div><div class="a" style="left:331.5px;top:237.5px;width:17.500px;height:40.500px;background:#649444"></div><div class="a" style="left:337.0px;top:238.8px;width:8.800px;height:9px;background:#86b560;border-radius:2.500px"></div><div class="a" style="left:337.0px;top:248.8px;width:8.800px;height:9px;background:#86b560;border-radius:2.500px"></div><div class="a" style="left:337.0px;top:258.8px;width:8.800px;height:9px;background:#86b560;border-radius:2.500px"></div><div class="a" style="left:337.0px;top:268.8px;width:8.800px;height:9px;background:#86b560;border-radius:2.500px"></div><div class="a" style="left:338.79999999999995px;top:240.7px;width:5.200px;height:5.200px;border-radius:50%;border:1px solid #e4ecd8"></div><div class="a" style="left:340.59999999999997px;top:242.5px;width:1.600px;height:1.600px;border-radius:50%;background:#e4ecd8"></div><svg class="a" style="left:338.4px;top:250.3px" width="6" height="6" viewBox="0 0 6 6"><path d="M.5 5.500L1.200 3.800 4.300 .7 5.300 1.700 2.200 4.800z" fill="#eef4e4"></path></svg><svg class="a" style="left:338.4px;top:260.3px" width="6" height="6" viewBox="0 0 6 6"><path d="M0 2.300H3V.5L6 3 3 5.500V3.700H0z" fill="#eef4e4"></path></svg><svg class="a" style="left:338.4px;top:270.3px" width="6" height="6" viewBox="0 0 6 6"><path d="M.5 5.500L1.200 3.800 4.300 .7 5.300 1.700 2.200 4.800z" fill="#eef4e4"></path><circle cx="4.600" cy="1.400" r="1.100" fill="#eef4e4"></circle></svg><div class="a" style="left:331px;top:256.700px;width:5px;height:3px;background:#a8c888"></div><div class="a" style="left:349.200px;top:239px;width:48.300px;height:37.500px;background:#0a0202;overflow:hidden"><svg class="a" style="left:0;top:0" width="48.300" height="37.500" viewBox="0 0 48.300 37.500"><path d="M2.5 18.1L3.7 23.3L5.1 16.5L6.4 25.8L7.2 12.3L8.3 25.5L9.1 13.1L10.4 27.4L11.2 5.2L11.9 33.2L12.8 4.0L13.7 35.0L14.9 11.4L16.0 35.5L17.0 7.7L17.8 26.0L18.9 12.5L19.8 29.8L20.9 9.0L22.1 27.9L22.8 6.1L23.6 32.9L24.7 10.6L25.5 33.9L26.7 4.7L27.7 29.3L28.9 11.8L30.1 32.6L31.5 10.7L32.6 34.0L33.9 6.4L34.8 26.4L35.7 7.1L36.5 27.9L37.6 7.5L38.7 33.5L39.7 12.8L40.4 31.6L41.3 6.6L42.4 32.1L43.4 11.7L44.3 31.7" stroke="#d01010" stroke-width="1.1" fill="none" opacity="0.9" stroke-linejoin="round"></path><path d="M2.5 19.2L3.5 20.6L4.6 13.4L6.0 23.2L7.3 15.3L8.3 23.5L9.4 11.8L10.6 25.7L12.3 11.8L13.5 31.6L15.0 7.8L16.6 30.3L17.5 3.2L18.6 35.0L20.1 3.2L21.3 33.0L22.8 11.7L24.2 35.5L25.5 9.1L26.8 29.4L28.5 7.9L29.5 26.8L30.7 9.3L31.9 34.9L33.0 7.3L34.4 34.1L35.9 7.8L37.4 28.2L38.7 9.6L39.9 30.1L41.1 9.9L42.1 30.4L43.6 8.0L45.3 25.1" stroke="#f01414" stroke-width="1" fill="none" opacity="0.85" stroke-linejoin="round"></path><path d="M2.5 18.0L4.4 19.8L5.9 16.2L7.8 26.7L9.7 12.0L11.1 33.1L13.1 11.9L14.6 30.8L15.8 12.7L17.5 28.3L19.7 10.7L21.0 29.2L22.4 4.2L23.7 33.3L25.4 6.4L26.9 26.9L29.1 3.4L30.7 29.9L32.5 10.2L34.1 31.7L35.8 12.7L37.4 30.0L39.1 9.2L40.4 30.1L42.3 11.0L43.8 30.6L45.5 9.4" stroke="#a00c0c" stroke-width="1.2" fill="none" opacity="0.7" stroke-linejoin="round"></path></svg><span class="t" style="left:1px;top:3.0px;font-size:3.800px;color:#cfcfcf">1</span><span class="t" style="left:1px;top:12.5px;font-size:3.800px;color:#cfcfcf">0</span><span class="t" style="left:1px;top:22.0px;font-size:3.800px;color:#cfcfcf">0</span><span class="t" style="left:1px;top:31.5px;font-size:3.800px;color:#cfcfcf">0</span></div><div class="a" style="left:398.700px;top:251px;width:4.800px;height:13.500px;background:#6f9a4c"></div><div class="a" style="left:398.700px;top:257.400px;width:4.800px;height:.8px;background:#4a6a34"></div><div class="a" style="left:331.5px;top:279.6px;width:72px;height:8.600px;background:#303034"></div><span class="t m" style="left: 333.5px; top: 281px; font-size: 7.6px; color: rgb(220, 220, 224); transform: scaleX(0.903); transform-origin: 0px 0px;">topto1</span><div class="a" style="left:380.0px;top:280.40000000000003px;width:7px;height:7.200px;background:#3c3c41;border:.5px solid #4c4c52"></div><div class="a" style="left:387.8px;top:280.40000000000003px;width:7px;height:7.200px;background:#3c3c41;border:.5px solid #4c4c52"></div><div class="a" style="left:395.6px;top:280.40000000000003px;width:7px;height:7.200px;background:#3c3c41;border:.5px solid #4c4c52"></div><span class="t" style="left:382.3px;top:281.90000000000003px;font-size:4.500px;color:#6c6c72">↓</span><span class="t" style="left:397.3px;top:281.1px;font-size:5.500px;color:#7c7c82">+</span><div class="a" style="left:438px;top:232.500px;width:81.500px;height:59.500px;border:1.900px solid #2abf2c;background:#243a21"></div><div class="a" style="left:443px;top:237.500px;width:71.500px;height:40.500px;background:#6e6e70"></div><div class="a" style="left:509px;top:238.500px;width:5.500px;height:39.500px;background:#858587"></div><div class="a" style="left:443px;top:237.5px;width:17.500px;height:40.500px;background:#649444"></div><div class="a" style="left:448.5px;top:238.8px;width:8.800px;height:9px;background:#86b560;border-radius:2.500px"></div><div class="a" style="left:448.5px;top:248.8px;width:8.800px;height:9px;background:#86b560;border-radius:2.500px"></div><div class="a" style="left:448.5px;top:258.8px;width:8.800px;height:9px;background:#86b560;border-radius:2.500px"></div><div class="a" style="left:448.5px;top:268.8px;width:8.800px;height:9px;background:#86b560;border-radius:2.500px"></div><div class="a" style="left:450.29999999999995px;top:240.7px;width:5.200px;height:5.200px;border-radius:50%;border:1px solid #e4ecd8"></div><div class="a" style="left:452.09999999999997px;top:242.5px;width:1.600px;height:1.600px;border-radius:50%;background:#e4ecd8"></div><svg class="a" style="left:449.9px;top:250.3px" width="6" height="6" viewBox="0 0 6 6"><path d="M.5 5.500L1.200 3.800 4.300 .7 5.300 1.700 2.200 4.800z" fill="#eef4e4"></path></svg><svg class="a" style="left:449.9px;top:260.3px" width="6" height="6" viewBox="0 0 6 6"><path d="M0 2.300H3V.5L6 3 3 5.500V3.700H0z" fill="#eef4e4"></path></svg><svg class="a" style="left:449.9px;top:270.3px" width="6" height="6" viewBox="0 0 6 6"><path d="M.5 5.500L1.200 3.800 4.300 .7 5.300 1.700 2.200 4.800z" fill="#eef4e4"></path><circle cx="4.600" cy="1.400" r="1.100" fill="#eef4e4"></circle></svg><div class="a" style="left:442.600px;top:255px;width:4.600px;height:5px;background:#0c0c0c"></div><div class="a" style="left:459.500px;top:239px;width:49.500px;height:37.500px;background:#020202"></div><div class="a" style="left:483.500px;top:239px;width:.8px;height:37.500px;background:#2a2a2a"></div><div class="a" style="left:509.800px;top:251px;width:4.800px;height:13.500px;background:#6f9a4c"></div><div class="a" style="left:509.800px;top:257.400px;width:4.800px;height:.8px;background:#3a4a2c"></div><div class="a" style="left:443px;top:279.6px;width:71.5px;height:8.600px;background:#303034"></div><span class="t m" style="left: 445px; top: 281px; font-size: 7.6px; color: rgb(220, 220, 224); transform: scaleX(0.905); transform-origin: 0px 0px;">express1</span><div class="a" style="left:491.0px;top:280.40000000000003px;width:7px;height:7.200px;background:#3c3c41;border:.5px solid #4c4c52"></div><div class="a" style="left:498.8px;top:280.40000000000003px;width:7px;height:7.200px;background:#3c3c41;border:.5px solid #4c4c52"></div><div class="a" style="left:506.6px;top:280.40000000000003px;width:7px;height:7.200px;background:#3c3c41;border:.5px solid #4c4c52"></div><span class="t" style="left:493.3px;top:281.90000000000003px;font-size:4.500px;color:#6c6c72">↓</span><span class="t" style="left:508.3px;top:281.1px;font-size:5.500px;color:#7c7c82">+</span><div class="a" style="left:495.300px;top:232.600px;width:10px;height:10px;border-radius:50%;background:#e41d25;border:.6px solid #7a0c10"></div><svg class="a" style="left:497.300px;top:234.600px" width="6" height="6" viewBox="0 0 6 6"><path d="M.6 .6L5.400 5.400M5.400 .6L.6 5.400" stroke="#4a0508" stroke-width="1.100"></path></svg><svg class="a" style="left:435.500px;top:255.500px" width="9" height="14" viewBox="0 0 9 14"><path d="M.8 .8V11.200L3.300 8.900 5 12.900 6.900 12.100 5.200 8.200H8.500z" fill="#111" stroke="#fff" stroke-width=".9" stroke-linejoin="round"></path></svg><div class="a" style="left:331.500px;top:307px;width:72px;height:40.500px;background:#6e6e70"></div><div class="a" style="left:397.500px;top:308px;width:6px;height:39.500px;background:#858587"></div><div class="a" style="left:331.5px;top:307px;width:17.500px;height:40.500px;background:#5c5694"></div><div class="a" style="left:337.0px;top:308.3px;width:8.800px;height:9px;background:#7b75b2;border-radius:2.500px"></div><div class="a" style="left:337.0px;top:318.3px;width:8.800px;height:9px;background:#7b75b2;border-radius:2.500px"></div><div class="a" style="left:337.0px;top:328.3px;width:8.800px;height:9px;background:#7b75b2;border-radius:2.500px"></div><div class="a" style="left:337.0px;top:338.3px;width:8.800px;height:9px;background:#7b75b2;border-radius:2.500px"></div><div class="a" style="left:338.79999999999995px;top:310.2px;width:5.200px;height:5.200px;border-radius:50%;border:1px solid #e4ecd8"></div><div class="a" style="left:340.59999999999997px;top:312px;width:1.600px;height:1.600px;border-radius:50%;background:#e4ecd8"></div><svg class="a" style="left:338.4px;top:319.8px" width="6" height="6" viewBox="0 0 6 6"><path d="M.5 5.500L1.200 3.800 4.300 .7 5.300 1.700 2.200 4.800z" fill="#eef4e4"></path></svg><svg class="a" style="left:338.4px;top:329.8px" width="6" height="6" viewBox="0 0 6 6"><path d="M0 2.300H3V.5L6 3 3 5.500V3.700H0z" fill="#eef4e4"></path></svg><svg class="a" style="left:338.4px;top:339.8px" width="6" height="6" viewBox="0 0 6 6"><path d="M.5 5.500L1.200 3.800 4.300 .7 5.300 1.700 2.200 4.800z" fill="#eef4e4"></path><circle cx="4.600" cy="1.400" r="1.100" fill="#eef4e4"></circle></svg><div class="a" style="left:331.500px;top:321.500px;width:3.500px;height:2.200px;background:#26243a"></div><div class="a" style="left:331.500px;top:331px;width:3.500px;height:2.200px;background:#26243a"></div><div class="a" style="left:349.200px;top:308.500px;width:48.300px;height:38.300px;background:#1e1e1e"></div><svg class="a" style="left:353.500px;top:308.500px" width="38.400" height="38.300" viewBox="0 0 38.400 38.300"><defs><filter id="nz" x="0" y="0" width="100%" height="100%"><feTurbulence type="fractalNoise" baseFrequency=".24" numOctaves="4" seed="9"></feTurbulence><feColorMatrix type="matrix" values="0 0 0 0 0  0 0 0 0 0  0 0 0 0 0  7 0 0 0 -2.850"></feColorMatrix><feComposite in="SourceGraphic" operator="in"></feComposite></filter></defs><rect width="38.400" height="38.300" fill="#060606"></rect><rect width="38.400" height="38.300" fill="#f6f6f6" filter="url(#nz)"></rect></svg><div class="a" style="left:399.500px;top:320.500px;width:3.800px;height:14px;background:#5a58a6"></div><div class="a" style="left:399.500px;top:327.200px;width:3.800px;height:.8px;background:#3a3870"></div><div class="a" style="left:331.5px;top:349.1px;width:72px;height:8.600px;background:#303034"></div><span class="t m" style="left: 333.5px; top: 350.5px; font-size: 7.6px; color: rgb(220, 220, 224); transform: scaleX(0.903); transform-origin: 0px 0px;">noise2</span><div class="a" style="left:380.0px;top:349.90000000000003px;width:7px;height:7.200px;background:#3c3c41;border:.5px solid #4c4c52"></div><div class="a" style="left:387.8px;top:349.90000000000003px;width:7px;height:7.200px;background:#3c3c41;border:.5px solid #4c4c52"></div><div class="a" style="left:395.6px;top:349.90000000000003px;width:7px;height:7.200px;background:#3c3c41;border:.5px solid #4c4c52"></div><span class="t" style="left:382.3px;top:351.40000000000003px;font-size:4.500px;color:#6c6c72">↓</span><span class="t" style="left:397.3px;top:350.6px;font-size:5.500px;color:#7c7c82">+</span><div class="a" style="left:623px;top:126px;width:20px;height:42px;background:#6e6e70"></div><div class="a" style="left:623px;top:126px;width:17.500px;height:40.500px;background:#649444"></div><div class="a" style="left:628.5px;top:127.3px;width:8.800px;height:9px;background:#86b560;border-radius:2.500px"></div><div class="a" style="left:628.5px;top:137.3px;width:8.800px;height:9px;background:#86b560;border-radius:2.500px"></div><div class="a" style="left:628.5px;top:147.3px;width:8.800px;height:9px;background:#86b560;border-radius:2.500px"></div><div class="a" style="left:628.5px;top:157.3px;width:8.800px;height:9px;background:#86b560;border-radius:2.500px"></div><div class="a" style="left:630.3px;top:129.2px;width:5.200px;height:5.200px;border-radius:50%;border:1px solid #e4ecd8"></div><div class="a" style="left:632.1px;top:131px;width:1.600px;height:1.600px;border-radius:50%;background:#e4ecd8"></div><svg class="a" style="left:629.9px;top:138.8px" width="6" height="6" viewBox="0 0 6 6"><path d="M.5 5.500L1.200 3.800 4.300 .7 5.300 1.700 2.200 4.800z" fill="#eef4e4"></path></svg><svg class="a" style="left:629.9px;top:148.8px" width="6" height="6" viewBox="0 0 6 6"><path d="M0 2.300H3V.5L6 3 3 5.500V3.700H0z" fill="#eef4e4"></path></svg><svg class="a" style="left:629.9px;top:158.8px" width="6" height="6" viewBox="0 0 6 6"><path d="M.5 5.500L1.200 3.800 4.300 .7 5.300 1.700 2.200 4.800z" fill="#eef4e4"></path><circle cx="4.600" cy="1.400" r="1.100" fill="#eef4e4"></circle></svg><div class="a" style="left:623px;top:144px;width:3.500px;height:5px;background:#a8c888"></div><div class="a" style="left:640px;top:127.500px;width:3px;height:39px;background:#080808"></div><div class="a" style="left:641px;top:129.5px;width:1.300px;height:1.800px;background:#d8d8d8"></div><div class="a" style="left:641px;top:134.1px;width:1.300px;height:1.800px;background:#d8d8d8"></div><div class="a" style="left:641px;top:138.7px;width:1.300px;height:1.800px;background:#d8d8d8"></div><div class="a" style="left:641px;top:143.3px;width:1.300px;height:1.800px;background:#d8d8d8"></div><div class="a" style="left:641px;top:147.9px;width:1.300px;height:1.800px;background:#d8d8d8"></div><div class="a" style="left:641px;top:152.5px;width:1.300px;height:1.800px;background:#d8d8d8"></div><div class="a" style="left:641px;top:157.1px;width:1.300px;height:1.800px;background:#d8d8d8"></div><div class="a" style="left:641px;top:161.7px;width:1.300px;height:1.800px;background:#d8d8d8"></div><div class="a" style="left:641px;top:166.3px;width:1.300px;height:1.800px;background:#d8d8d8"></div><div class="a" style="left:623px;top:168.500px;width:20px;height:8.500px;background:#303034"></div><span class="t m" style="left: 624.5px; top: 170px; font-size: 7.6px; color: rgb(220, 220, 224); transform: scaleX(0.888); transform-origin: 0px 0px;">box_</span><div class="a" style="left:642.500px;top:55.500px;width:185.500px;height:164.500px;background:#3e3e3e"></div><div class="a" style="left:642.500px;top:55.500px;width:185.500px;height:20.500px;background:#578339"></div><div class="a" style="left:674px;top:56.300px;width:154px;height:9px;background:#6c9a50"></div><span class="t" style="left: 644.8px; top: 58.2px; font-size: 5.3px; font-weight: bold; color: rgb(240, 244, 234); transform: scaleX(0.945); transform-origin: 0px 0px;">Expression</span><span class="t m" style="left: 676.4px; top: 57.3px; font-size: 7px; color: rgb(180, 204, 156); transform: scaleX(0.788); transform-origin: 0px 0px;">express1</span><span class="t" style="left:644.800px;top:66.500px;font-size:7.500px;font-weight:bold;color:#e8f0dc">?</span><div class="a" style="left:652.500px;top:66.500px;width:7px;height:7px;border-radius:1.500px;background:linear-gradient(135deg,#f0c83a 50%,#3a78b8 50%)"></div><div class="a" style="left:654.500px;top:68.300px;width:3px;height:3.400px;background:#f6f0d0;border-radius:.5px"></div><span class="t" style="left:664.800px;top:66.300px;font-size:7.500px;font-weight:bold;color:#fff">i</span><svg class="a" style="left:771.500px;top:67px" width="6" height="6" viewBox="0 0 6 6"><path d="M.5 5.500L1.200 3.800 4.300 .7 5.300 1.700 2.200 4.800z" fill="#9dbb88"></path></svg><div class="a" style="left:780.500px;top:68px;width:6px;height:4px;border-radius:1px;background:#9dbb88"></div><div class="a" style="left:789.500px;top:67px;width:6px;height:6px;border-radius:50%;border:1.200px solid #e4eedc;border-left-color:transparent"></div><div class="a" style="left:798px;top:66.200px;width:8px;height:8px;border-radius:50%;background:conic-gradient(#f4d03a 0 25%,#fff 25% 50%,#3a78c8 50% 75%,#fff 75% 100%);border:.5px solid #eef"></div><div class="a" style="left:808.500px;top:69.300px;width:7px;height:1.800px;background:#fff"></div><div class="a" style="left:811.100px;top:66.700px;width:1.800px;height:7px;background:#fff"></div><div class="a" style="left:817.500px;top:66.200px;width:8px;height:8px;border-radius:50%;background:#9ab48a;border:.8px solid #b4c8a6"></div><span class="t" style="left: 646.7px; top: 80.8px; font-size: 5.7px; color: rgb(188, 188, 188); transform: scaleX(0.945); transform-origin: 0px 0px;">Expression</span><span class="t" style="left: 679.7px; top: 80.8px; font-size: 5.7px; color: rgb(160, 160, 160); transform: scaleX(0.953); transform-origin: 0px 0px;">Common</span><div class="a" style="left:644.500px;top:88.300px;width:181px;height:.8px;background:#6c6c6c"></div><div class="a" style="left:644.500px;top:87.600px;width:32px;height:1.200px;background:#e8e8e8"></div><span class="t" style="right:119.5px;top:92.3px;font-size:5.700px;color:#b6b6b6">Channels per Expr</span><div class="a" style="left:711px;top:91.4px;width:7.5px;height:7.600px;background:#2a2a2a"></div><span class="t" style="left:712.500px;top:92.5px;font-size:5.500px;color:#d8d8d8">1</span><div class="a" style="left:735px;top:94.9px;width:90.500px;height:.7px;background:#4b4b4b"></div><div class="a" style="left:733.500px;top:91.7px;width:2.600px;height:7px;background:#8c8c8c"></div><div class="a" style="left:718.500px;top:91.400px;width:12.700px;height:7.600px;background:#474747"></div><span class="t" style="right:119.5px;top:101.6px;font-size:5.700px;color:#b6b6b6">Limit Output Channels</span><div class="a" style="left:711px;top:100.7px;width:9.5px;height:7.600px;background:#2a2a2a"></div><span class="t" style="left:712.500px;top:101.8px;font-size:5.500px;color:#d8d8d8">Off</span><div class="a" style="left:721.300px;top:100.700px;width:10.200px;height:7.600px;background:#4a4a4a"></div><span class="t" style="right:119.5px;top:110.89999999999999px;font-size:5.700px;color:#585858">Number of Channels</span><span class="t" style="left:712.500px;top:111.1px;font-size:5.500px;color:#5c5c5c">7</span><div class="a" style="left:735px;top:113.5px;width:90.500px;height:.7px;background:#444"></div><div class="a" style="left:733.500px;top:110.3px;width:2.600px;height:7px;background:#505050"></div><span class="t" style="right:119.5px;top:125.29999999999998px;font-size:5.700px;color:#b6b6b6">Expression 0</span><div class="a" style="left:711px;top:124.39999999999999px;width:20.5px;height:7.600px;background:#2a2a2a"></div><span class="t" style="left:712.500px;top:125.49999999999999px;font-size:5.500px;color:#d8d8d8">0</span><div class="a" style="left:735px;top:127.89999999999999px;width:90.500px;height:.7px;background:#4b4b4b"></div><div class="a" style="left:733.500px;top:124.69999999999999px;width:2.600px;height:7px;background:#a8dccc"></div><div class="a" style="left:711px;top:133.800px;width:9.300px;height:7.600px;background:#505050"></div><div class="a" style="left:721.700px;top:133.800px;width:9.800px;height:7.600px;background:#505050"></div><span class="t" style="left:713.700px;top:134.300px;font-size:6.500px;color:#c0c0c0">+</span><span class="t" style="left:725.300px;top:134px;font-size:6.500px;color:#8a8a8a">-</span><div class="a" style="left:645px;top:149.300px;width:183px;height:7.400px;background:#4e4e4e"></div><span class="t" style="left:663.700px;top:150.400px;font-size:5.700px;color:#c4c4c4">Input OP</span><svg class="a" style="left:674px;top:309px" width="113" height="113" viewBox="0 0 113 113"><defs><clipPath id="cc"><circle cx="56.700" cy="56.500" r="56.300"></circle></clipPath><filter id="bl"><feGaussianBlur stdDeviation=".8"></feGaussianBlur></filter><linearGradient id="wl" x1="0" x2="1"><stop offset="0" stop-color="#eae8e3"></stop><stop offset=".6" stop-color="#e0ddd6"></stop><stop offset="1" stop-color="#d2cec6"></stop></linearGradient></defs><g clip-path="url(#cc)"><g filter="url(#bl)"><rect x="-5" y="-5" width="123" height="123" fill="url(#wl)"></rect><rect x="-5" y="-5" width="19.500" height="123" fill="#f3f2f0"></rect><rect x="3" y="36.500" width="11.500" height="4.500" fill="#f0c424"></rect><rect x="20.500" y="25" width="21.500" height="57" fill="#c9c5ba"></rect><rect x="20.500" y="25" width="2.500" height="57" fill="#efede8"></rect><rect x="20.500" y="25" width="21.500" height="2" fill="#f1efea"></rect><rect x="20.500" y="44.500" width="21.500" height="2" fill="#f1efea"></rect><rect x="20.500" y="61" width="21.500" height="2" fill="#f1efea"></rect><ellipse cx="37" cy="19" rx="6.500" ry="4.500" fill="#466f3c"></ellipse><ellipse cx="30.500" cy="20.500" rx="3.500" ry="4" fill="#34562d"></ellipse><ellipse cx="27.500" cy="22" rx="2" ry="3" fill="#222c20"></ellipse><ellipse cx="43" cy="17" rx="3" ry="2.500" fill="#5a8a4c"></ellipse><ellipse cx="59" cy="15.500" rx="6.500" ry="3.200" fill="#4a7a3e"></ellipse><ellipse cx="66.500" cy="17.500" rx="3.500" ry="2.300" fill="#3e6e34"></ellipse><ellipse cx="52" cy="16.500" rx="2.500" ry="2" fill="#5c8c4e"></ellipse><rect x="19.500" y="26" width="2.200" height="34" fill="#55624f"></rect><ellipse cx="32.500" cy="37" rx="6.500" ry="5" fill="#3b6833"></ellipse><rect x="28.500" y="40" width="8" height="4.500" fill="#6e5e48"></rect><ellipse cx="31" cy="54" rx="5.500" ry="4" fill="#4c7c3c"></ellipse><rect x="27.500" y="56.500" width="7.500" height="4.500" fill="#e0dcd0"></rect><rect x="24" y="66" width="4" height="16" fill="#2c4e92"></rect><rect x="28" y="66" width="3" height="16" fill="#182844"></rect><rect x="31" y="67" width="3.500" height="15" fill="#383838"></rect><rect x="34.500" y="66.500" width="5.500" height="15.500" fill="#3862a6"></rect><rect x="81.500" y="9" width="36" height="52" fill="#efebe0" stroke="#c9b896" stroke-width="1.300"></rect><path d="M87 18h17v6H94v9h10v6H87z" fill="#2b4bd4"></path><path d="M95 27h16v19h-9v-6h4v-7H95z" fill="#e97c7c"></path><path d="M89 42h8v8h14v5H89z" fill="#2b4bd4"></path><path d="M105 16h8v11h-4v-6h-4z" fill="#e97c7c"></path><path d="M107 34h7v18h-5z" fill="#2b4bd4"></path><path d="M4 118V93c2-6 10-10 22-13l17-4c4 10 10 15 17 15s13-5 17-15l14 3c12 3 20 6 23 14v25z" fill="#141b31"></path><path d="M43 70h34v7c-3 9-9 14-17 14s-14-5-17-14z" fill="#b48a74"></path><ellipse cx="60" cy="46" rx="19" ry="26.500" fill="#d0a892"></ellipse><ellipse cx="60" cy="33" rx="17" ry="13" fill="#dfc0ae"></ellipse><ellipse cx="56" cy="27" rx="8" ry="5" fill="#e9d0c0" opacity=".7"></ellipse><ellipse cx="41" cy="55" rx="2.200" ry="4.500" fill="#c0947e"></ellipse><ellipse cx="79" cy="55" rx="2.200" ry="4.500" fill="#c0947e"></ellipse><path d="M42.500 58c0 10 2.500 20 8 26 5 5.500 14 5.500 19 0 5.500-6 8-16 8-26-1.500 6-3.500 9.500-6.500 11-2-2.500-6-3.500-11-3.500s-9 1-11 3.500c-3-1.500-5-5-6.500-11z" fill="#3b2a22"></path><ellipse cx="60" cy="72.500" rx="4.800" ry="2" fill="#8c5c52"></ellipse><path d="M51 68.500c3-2.600 15-2.600 18 0" stroke="#2e201a" stroke-width="2.600" fill="none"></path><path d="M58 56c-.5 4-1.500 6-2 7.500 1.500 1.200 6.500 1.200 8 0-.5-1.500-1.500-3.500-2-7.500" fill="#c69a84"></path><rect x="44" y="48.500" width="14" height="10" rx="3.500" fill="rgba(255,255,255,.14)" stroke="#5e4e46" stroke-width=".9"></rect><rect x="62" y="48.500" width="14" height="10" rx="3.500" fill="rgba(255,255,255,.14)" stroke="#5e4e46" stroke-width=".9"></rect><path d="M58 52.500h4M44 52l-3.500-1M76 52l3.500-1" stroke="#5e4e46" stroke-width=".8"></path><ellipse cx="51" cy="53.800" rx="1.800" ry="1.100" fill="#36261f"></ellipse><ellipse cx="69" cy="53.800" rx="1.800" ry="1.100" fill="#36261f"></ellipse><path d="M45.500 47c3-1.600 8-1.600 11 0M63.500 47c3-1.600 8-1.600 11 0" stroke="#6c4c3c" stroke-width="1.100" fill="none"></path><ellipse cx="57.800" cy="106" rx="4.800" ry="6.500" fill="#26262c"></ellipse></g></g></svg><div class="a" style="left:32px;top:435px;width:796px;height:31px;background:#2e2e32"></div><div class="a" style="left:32px;top:434.800px;width:120px;height:31.200px;background:#121219"></div><span class="t" style="left:33.800px;top:438.8px;font-size:5.600px;color:#7c86ac">Start:</span><span class="t" style="left:60.500px;top:438.8px;font-size:5.600px;color:#aab4e2">1</span><span class="t" style="left:89.700px;top:438.8px;font-size:5.600px;color:#7c86ac">End:</span><span class="t" style="left:115.700px;top:438.8px;font-size:5.600px;color:#aab4e2">600</span><span class="t" style="left:33.800px;top:445.09999999999997px;font-size:5.600px;color:#7c86ac">RStart:</span><span class="t" style="left:60.500px;top:445.09999999999997px;font-size:5.600px;color:#aab4e2">1</span><span class="t" style="left:89.700px;top:445.09999999999997px;font-size:5.600px;color:#7c86ac">REnd:</span><span class="t" style="left:115.700px;top:445.09999999999997px;font-size:5.600px;color:#aab4e2">600</span><span class="t" style="left:33.800px;top:451.59999999999997px;font-size:5.600px;color:#7c86ac">FPS:</span><span class="t" style="left:60.500px;top:451.59999999999997px;font-size:5.600px;color:#aab4e2">60.0</span><span class="t" style="left:89.700px;top:451.59999999999997px;font-size:5.600px;color:#7c86ac">Tempo:</span><span class="t" style="left:115.700px;top:451.59999999999997px;font-size:5.600px;color:#aab4e2">120.0</span><span class="t" style="left:33.800px;top:457.9px;font-size:5.600px;color:#7c86ac">ResetF:</span><span class="t" style="left:60.500px;top:457.9px;font-size:5.600px;color:#aab4e2">1</span><span class="t" style="left:89.700px;top:457.9px;font-size:5.600px;color:#7c86ac">T Sig:</span><span class="t" style="left:115.700px;top:457.9px;font-size:5.600px;color:#aab4e2">4</span><span class="t" style="left:132px;top:457.9px;font-size:5.600px;color:#aab4e2">4</span><div class="a" style="left:152px;top:435.500px;width:676px;height:6.500px;background:#101012"></div><div class="a" style="left:152px;top:441.800px;width:676px;height:3.600px;background:#3f4c72"></div><div class="a" style="left:152px;top:441.800px;width:11px;height:3.600px;background:#747884"></div><span class="t" style="left:153.0px;top:436.600px;font-size:4.600px;color:#74747a">1</span><span class="t" style="left:209.6px;top:436.600px;font-size:4.600px;color:#74747a">51</span><span class="t" style="left:266.1px;top:436.600px;font-size:4.600px;color:#74747a">101</span><span class="t" style="left:322.6px;top:436.600px;font-size:4.600px;color:#74747a">151</span><span class="t" style="left:379.2px;top:436.600px;font-size:4.600px;color:#74747a">201</span><span class="t" style="left:435.8px;top:436.600px;font-size:4.600px;color:#74747a">251</span><span class="t" style="left:492.3px;top:436.600px;font-size:4.600px;color:#74747a">301</span><span class="t" style="left:548.8px;top:436.600px;font-size:4.600px;color:#74747a">351</span><span class="t" style="left:605.4px;top:436.600px;font-size:4.600px;color:#74747a">401</span><span class="t" style="left:662.0px;top:436.600px;font-size:4.600px;color:#74747a">451</span><span class="t" style="left:718.5px;top:436.600px;font-size:4.600px;color:#74747a">501</span><span class="t" style="left:775.0px;top:436.600px;font-size:4.600px;color:#74747a">551</span><span class="t" style="left:817.500px;top:436.600px;font-size:4.600px;color:#74747a">600</span><div class="a" style="left:637.800px;top:436px;width:1.100px;height:5.500px;background:#a4a8b4"></div><div class="a" style="left:820px;top:441.800px;width:8px;height:3.600px;background:#6a6e7a"></div><div class="a" style="left:153px;top:448.500px;width:7px;height:7.500px;background:#3a3a3e;border:.5px solid #4a4a4e"></div><div class="a" style="left:153px;top:457px;width:7px;height:7.500px;background:#3a3a3e;border:.5px solid #4a4a4e"></div><div class="a" style="left:163.400px;top:448.200px;width:29px;height:7px;background:#e8934c"></div><span class="t" style="left:165.300px;top:449.200px;font-size:5.500px;color:#4a2408">TimeCode</span><div class="a" style="left:163.400px;top:457.400px;width:29px;height:7.600px;background:#3b3b3f"></div><span class="t" style="left:170.500px;top:458.600px;font-size:5.500px;color:#9a9aa0">Beats</span><div class="a" style="left:194px;top:447.800px;width:85.500px;height:16.700px;background:#08080c"></div><span class="t" id="tc" style="left: 202px; top: 450.5px; font-size: 12px; color: rgb(156, 170, 222); letter-spacing: 0.15px; transform: scaleX(1.075); transform-origin: 0px 0px;">00:00:07.11</span><div class="a" style="left:281px;top:447.800px;width:57.500px;height:16.700px;background:#08080c"></div><span class="t" id="fr" style="left: 299.8px; top: 450.5px; font-size: 12px; color: rgb(156, 170, 222); transform: scaleX(0.988); transform-origin: 0px 0px;">432</span><div class="a" style="left:341.6px;top:447.800px;width:14px;height:16.700px;background:#3c3c40"></div><div class="a" style="left:358.5px;top:447.800px;width:14px;height:16.700px;background:#3c3c40"></div><div class="a" style="left:375.8px;top:447.800px;width:14px;height:16.700px;background:#3c3c40"></div><div class="a" style="left:393px;top:447.800px;width:15px;height:16.700px;background:#dd9150"></div><svg class="a" style="left:345.500px;top:453.700px" width="6" height="5" viewBox="0 0 6 5"><path d="M0 0h1v5H0zM3.500 2.500L6 .3v4.400zM1 2.500L3.500 .3v4.400z" fill="#a8a8b0"></path></svg><div class="a" style="left:363.700px;top:453.700px;width:1.100px;height:5px;background:#a8a8b0"></div><div class="a" style="left:366px;top:453.700px;width:1.100px;height:5px;background:#a8a8b0"></div><svg class="a" style="left:381px;top:453.700px" width="3.500" height="5" viewBox="0 0 3.500 5"><path d="M0 2.500L3.500 0v5z" fill="#a8a8b0"></path></svg><svg class="a" style="left:399.200px;top:453.700px" width="3.500" height="5" viewBox="0 0 3.500 5"><path d="M3.500 2.500L0 0v5z" fill="#4a2408"></path></svg><div class="a" style="left:412px;top:447.800px;width:14px;height:16.700px;background:#37373b"></div><div class="a" style="left:429px;top:447.800px;width:14px;height:16.700px;background:#37373b"></div><span class="t" style="left:417.800px;top:452.600px;font-size:6.500px;color:#8a8a92">-</span><span class="t" style="left:434px;top:452.800px;font-size:7px;color:#b4b4bc">+</span><span class="t" style="left:446.500px;top:448.600px;font-size:5.700px;color:#c8c8ce">Range Limit</span><div class="a" style="left:446.500px;top:457.400px;width:21.500px;height:7.600px;background:#e8934c"></div><span class="t" style="left:450.800px;top:458.600px;font-size:5.500px;color:#4a2408">Loop</span><div class="a" style="left:469.700px;top:457.400px;width:17.500px;height:7.600px;background:#47474c"></div><span class="t" style="left:471.800px;top:458.600px;font-size:5.500px;color:#c8c8ce">Once</span><div class="a" id="dock" style="left:2.500px;top:62.300px;width:28.500px;height:351.500px;border-radius:7px;background:#606ef2;border:.7px solid #7e8cfa;box-shadow:0 1px 2px rgba(20,26,150,.5)"></div><div class="a" style="left:8px;top:66.0px;width:19px;height:19px;border-radius:4.500px;background:#2a8ef0;overflow:hidden;"><div class="a" style="left:0;top:0;width:10px;height:19px;background:linear-gradient(#3fb0f5,#1a7fe8)"></div><div class="a" style="left:10px;top:0;width:9px;height:19px;background:linear-gradient(#f4f6fa,#cfd6e4)"></div><svg class="a" style="left:0;top:0" width="19" height="19" viewBox="0 0 19 19"><path d="M10.500 0c-1.500 4-2 7-1.800 10.500h2.100c0 3 .2 6 .7 8.500" stroke="#1a3a6a" stroke-width=".7" fill="none"></path><path d="M4 12.500c2.500 2.500 8.500 2.500 11 0" stroke="#1a3a6a" stroke-width=".8" fill="none"></path><path d="M5.500 5.500v2.200M13.500 5.500v2.200" stroke="#1a3a6a" stroke-width=".9"></path></svg></div><div class="a" style="left:8px;top:90.5px;width:19px;height:19px;border-radius:4.500px;background:linear-gradient(#5ff277,#0dbc2c);overflow:hidden;"><div class="a" style="left:3px;top:4px;width:13px;height:10.500px;border-radius:50%;background:#fff"></div><svg class="a" style="left:3px;top:11px" width="6" height="5" viewBox="0 0 6 5"><path d="M1 4.500C2.500 3.500 3 2 3 0l3 2C5 3.500 3 4.500 1 4.500z" fill="#fff"></path></svg></div><div class="a" style="left:8px;top:115.0px;width:19px;height:19px;border-radius:4.500px;background:#f4f4f6;overflow:hidden;"><div class="a" style="left:1.500px;top:1.500px;width:16px;height:16px;border-radius:50%;background:conic-gradient(from -60deg,#ea4335 0 120deg,#fbbc05 120deg 240deg,#34a853 240deg 360deg)"></div><div class="a" style="left:5.500px;top:5.500px;width:8px;height:8px;border-radius:50%;background:#fff"></div><div class="a" style="left:6.500px;top:6.500px;width:6px;height:6px;border-radius:50%;background:#4285f4"></div></div><div class="a" style="left:8px;top:139.5px;width:19px;height:19px;border-radius:4.500px;background:linear-gradient(#fb5c74,#f8233b);overflow:hidden;"><svg class="a" style="left:4.500px;top:4px" width="10" height="11" viewBox="0 0 10 11"><path d="M3.200 2.200L9 .8v6.700" stroke="#fff" stroke-width="1.200" fill="none"></path><path d="M3.200 2.200v6.700" stroke="#fff" stroke-width="1.200"></path><ellipse cx="2" cy="9" rx="1.900" ry="1.500" fill="#fff"></ellipse><ellipse cx="7.800" cy="7.600" rx="1.900" ry="1.500" fill="#fff"></ellipse><path d="M3.200 1.600L9 .2v2L3.200 3.600z" fill="#fff"></path></svg></div><div class="a" style="left:8px;top:163.5px;width:19px;height:19px;border-radius:4.500px;background:#fafafa;overflow:hidden;"><div class="a" style="left:4.500px;top:7.300px;width:4.500px;height:2px;border-radius:1px;background:#36c5f0"></div><div class="a" style="left:7.300px;top:4.300px;width:2px;height:4.500px;border-radius:1px;background:#36c5f0"></div><div class="a" style="left:10px;top:4.500px;width:2px;height:4.500px;border-radius:1px;background:#2eb67d"></div><div class="a" style="left:10px;top:7.300px;width:4.800px;height:2px;border-radius:1px;background:#2eb67d"></div><div class="a" style="left:10px;top:10px;width:4.500px;height:2px;border-radius:1px;background:#ecb22e"></div><div class="a" style="left:10px;top:10px;width:2px;height:4.800px;border-radius:1px;background:#ecb22e"></div><div class="a" style="left:7.300px;top:10px;width:2px;height:4.500px;border-radius:1px;background:#e01e5a"></div><div class="a" style="left:4.300px;top:10px;width:4.800px;height:2px;border-radius:1px;background:#e01e5a"></div></div><div class="a" style="left:8px;top:187.5px;width:19px;height:19px;border-radius:4.500px;background:#f6f6f8;overflow:hidden;"><svg class="a" style="left:3.500px;top:3.500px" width="12" height="12" viewBox="0 0 12 12"><path d="M8.700 .3L11.700 1.700v8.600L8.700 11.700 3.600 7 1.300 8.800.3 8.200V3.800l1-.6L3.600 5z M8.700 3.500L5.500 6l3.200 2.500z" fill="#1f8ad2" fill-rule="evenodd"></path></svg></div><div class="a" style="left:8px;top:211.5px;width:19px;height:19px;border-radius:4.500px;background:#1c1c1e;overflow:hidden;"><div class="a" style="left:6.300px;top:3.500px;width:3.300px;height:4px;border-radius:2px 0 0 2px;background:#f24e1e"></div><div class="a" style="left:9.600px;top:3.500px;width:3.300px;height:4px;border-radius:0 2px 2px 0;background:#ff7262"></div><div class="a" style="left:6.300px;top:7.500px;width:3.300px;height:4px;border-radius:2px 0 0 2px;background:#a259ff"></div><div class="a" style="left:9.600px;top:7.500px;width:3.600px;height:4px;border-radius:50%;background:#1abcfe"></div><div class="a" style="left:6.300px;top:11.500px;width:3.300px;height:4px;border-radius:2px 0 2px 2px;background:#0acf83"></div></div><div class="a" style="left:8px;top:234.5px;width:19px;height:19px;border-radius:4.500px;background:linear-gradient(#3fb6fb,#1a6ff0);overflow:hidden;"><div class="a" style="left:3.500px;top:5.500px;width:12px;height:8px;border-radius:1px;background:#f6f8fc"></div><svg class="a" style="left:3.500px;top:5.500px" width="12" height="8" viewBox="0 0 12 8"><path d="M.3 .5L6 4.600 11.700 .5" stroke="#9ab4d8" stroke-width=".7" fill="none"></path></svg></div><div class="a" style="left:8px;top:259.0px;width:19px;height:19px;border-radius:4.500px;background:#ee4a18;overflow:hidden;"><div class="a" style="left:0;top:0;width:19px;height:5px;background:#f0541e"></div><div class="t" style="left:4.500px;top:5.500px;font-size:4.500px;color:rgba(255,200,170,.55)">JUL</div><div class="t" style="left:9.500px;top:10.500px;font-size:6px;color:rgba(255,225,205,.7)">31</div><div class="a" style="left:4px;top:10px;width:1.500px;height:1.500px;background:#ffb48a"></div><div class="a" style="left:4px;top:13px;width:1.500px;height:1.500px;background:#ffb48a"></div></div><div class="a" style="left:8px;top:283.5px;width:19px;height:19px;border-radius:4.500px;background:linear-gradient(#5bf777,#10b83a);overflow:hidden;"><div class="a" style="left:3.500px;top:3.500px;width:12px;height:12px;border-radius:50%;border:1.300px solid #fff"></div><svg class="a" style="left:3px;top:12px" width="5" height="5" viewBox="0 0 5 5"><path d="M0 4.500L1 1l2.500 2.500z" fill="#fff"></path></svg><svg class="a" style="left:6.500px;top:6.500px" width="6.500" height="6.500" viewBox="0 0 10 10"><path d="M2 .8c.5-.4 1.200-.2 1.500.5l.5 1.300-.8.900c.7 1.500 1.800 2.600 3.300 3.300l.9-.8 1.300.5c.7.300.9 1 .5 1.500-.8 1-2 1.200-3.400.6C3.600 7.700 1.900 6 1.300 4.200.8 2.800 1 1.600 2 .8z" fill="#fff"></path></svg></div><svg class="a" style="left:6.600px;top:306.500px" width="22" height="20.500" viewBox="0 0 22 20.500"><rect x=".6" y=".6" width="20.800" height="19.300" fill="#8e9169" stroke="#14140f" stroke-width="1.200"></rect><path d="M4.500 4.500L17.500 16M17.500 4.500L4.500 16" stroke="#14140f" stroke-width="2.400"></path><rect x="2.800" y="2.800" width="4.200" height="4" fill="#14140f"></rect><rect x="15" y="2.800" width="4.200" height="4" fill="#14140f"></rect><rect x="2.800" y="13.700" width="4.200" height="4" fill="#14140f"></rect><rect x="15" y="13.700" width="4.200" height="4" fill="#14140f"></rect><rect x="8" y="1" width="6" height="2.200" fill="#14140f"></rect><rect x="8" y="17.300" width="6" height="2.200" fill="#14140f"></rect><circle cx="11" cy="10.250" r="4.600" fill="#14140f"></circle><circle cx="11" cy="10.250" r="3.700" fill="#fff"></circle><circle cx="11" cy="10.250" r="1.400" fill="#14140f"></circle></svg><div class="a" style="left:8px;top:331.5px;width:19px;height:19px;border-radius:4.500px;background:#f2f4f8;overflow:hidden;"><div class="a" style="left:2px;top:2px;width:15px;height:15px;border-radius:50%;background:linear-gradient(#3db4ee,#1c93d8)"></div><svg class="a" style="left:4.500px;top:5.500px" width="10" height="8.500" viewBox="0 0 10 8.500"><path d="M.3 3.900L9.500 .3 8 8 5.200 6 3.800 7.400 3.500 5.100 7.600 1.800 2.600 4.700z" fill="#fff"></path></svg></div><div class="a" style="left:8px;top:355.5px;width:19px;height:19px;border-radius:4.500px;background:#173e74;overflow:hidden;"><div class="a" style="left:0;top:0;width:19px;height:19px;background:linear-gradient(135deg,#1d4f8c,#0d2346)"></div><div class="a" style="left:3px;top:9px;width:11px;height:10px;background:#153a6c;transform:skewY(-12deg)"></div><div class="a" style="left:8px;top:2.500px;width:11px;height:5.500px;border-radius:1px;background:#e02828"></div><div class="t" style="left:9px;top:3.300px;font-size:4.200px;font-weight:bold;color:#fff">LIVE</div></div><div class="a" style="left:7px;top:383px;width:21px;height:.7px;background:#7c85ea"></div><svg class="a" style="left:8.500px;top:388.500px" width="18" height="22" viewBox="0 0 18 22"><defs><linearGradient id="tg" x1="0" x2="1"><stop offset="0" stop-color="#c9ccd6"></stop><stop offset=".5" stop-color="#f4f5f8"></stop><stop offset="1" stop-color="#b9bcc8"></stop></linearGradient></defs><path d="M1.500 3.500h15l-1.600 16.500c-.1 1-.8 1.500-1.700 1.500H4.800c-.9 0-1.600-.5-1.700-1.500z" fill="url(#tg)"></path><ellipse cx="9" cy="3.500" rx="7.500" ry="1.800" fill="#e9ebf0" stroke="#a4a8b6" stroke-width=".5"></ellipse><path d="M4 6.500l1 5 2-3 2 4 2-5 2 4 1.500-4" stroke="#9ea2b0" stroke-width=".6" fill="none"></path><path d="M5.500 13v6M9 14v5.500M12.500 13v6" stroke="#aeb2c0" stroke-width=".5"></path></svg><div class="a" style="left:4.300px;top:74.7px;width:1.600px;height:1.600px;border-radius:50%;background:#1a1f66"></div><div class="a" style="left:4.300px;top:123.7px;width:1.600px;height:1.600px;border-radius:50%;background:#1a1f66"></div><div class="a" style="left:4.300px;top:316.2px;width:1.600px;height:1.600px;border-radius:50%;background:#1a1f66"></div><div class="a" style="left:4.300px;top:364.2px;width:1.600px;height:1.600px;border-radius:50%;background:#1a1f66"></div></body></html>
